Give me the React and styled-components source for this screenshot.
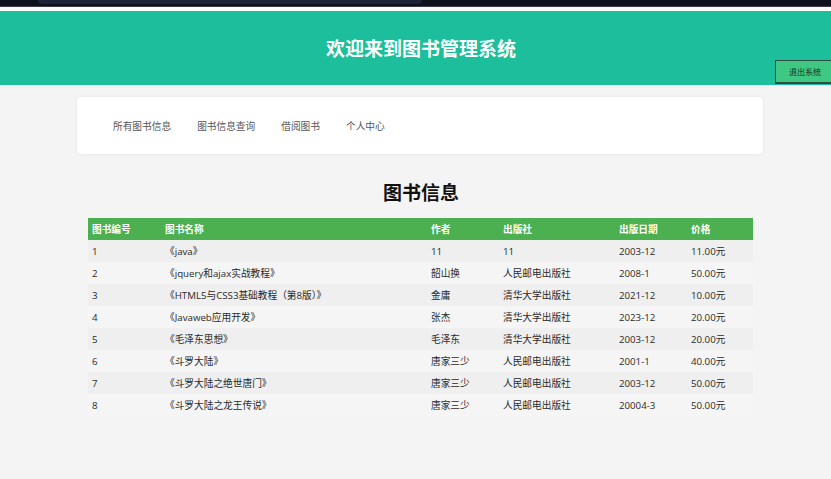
import React from "react";
import styled, { createGlobalStyle } from "styled-components";

const GlobalStyle = createGlobalStyle`
  html, body {
    margin: 0;
    padding: 0;
    background: #f4f4f4;
    font-family: "Open Sans", "Noto Sans CJK SC", sans-serif;
  }
`;

const Page = styled.div`
  width: 831px;
  height: 479px;
  overflow: hidden;
  display: flex;
  flex-direction: column;
`;

const Chrome = styled.div`
  height: 6px;
  background: #0e111c;
  border-bottom: 1px solid #3a3d48;
  padding-left: 38px;
  display: flex;
`;

const ChromePill = styled.div`
  width: 384px;
  height: 4px;
  background: #1e2236;
  border-radius: 0 0 4px 4px;
`;

const Gap = styled.div`
  height: 4px;
  background: #fafafa;
`;

const Header = styled.header`
  position: relative;
  height: 74px;
  background: #1dbe9b;
  display: flex;
  align-items: center;
  justify-content: center;
  padding-left: 11px;
`;

const Title = styled.h1`
  margin: 0;
  color: #fff;
  font-size: 19px;
  font-weight: 700;
`;

const Logout = styled.button`
  position: absolute;
  right: -4px;
  top: 49px;
  width: 60px;
  height: 24px;
  background: #3ec883;
  border: 1px solid #2d4d40;
  border-bottom-width: 2px;
  color: #1d2d25;
  font-size: 8px;
  font-family: inherit;
  padding: 0;
  text-align: center;
`;

const Main = styled.main`
  padding: 12px 68px 0 77px;
  display: flex;
  flex-direction: column;
`;

const NavCard = styled.nav`
  height: 57px;
  background: #fff;
  border-radius: 4px;
  box-shadow: 0 0 3px rgba(0, 0, 0, 0.08);
  display: flex;
  align-items: center;
  gap: 26px;
  padding: 0 36px;
`;

const NavLink = styled.a`
  font-size: 9.7px;
  color: #555;
  text-decoration: none;
`;

const SectionTitle = styled.h2`
  margin: 24px 0 12px;
  text-align: center;
  font-size: 19px;
  font-weight: 700;
  color: #111;
  padding-left: 2px;
`;

const Table = styled.table`
  margin-left: 11px;
  width: 665px;
  border-collapse: collapse;
  font-size: 9.7px;
  table-layout: fixed;
`;

const Th = styled.th`
  box-sizing: border-box;
  background: #4caf50;
  color: #fff;
  text-align: left;
  font-weight: 700;
  height: 22px;
  padding: 0 4px;
  width: ${p => p.w}px;
`;

const Row = styled.tr`
  background: ${p => (p.odd ? "#efefef" : "#f5f5f5")};
`;

const Td = styled.td`
  height: 22px;
  padding: 0 4px;
  color: #2a2a2a;
  white-space: nowrap;
`;

const columns = [
  { title: "图书编号", w: 73 },
  { title: "图书名称", w: 266 },
  { title: "作者", w: 72 },
  { title: "出版社", w: 116 },
  { title: "出版日期", w: 72 },
  { title: "价格", w: 66 },
];

const books = [
  ["1", "《java》", "11", "11", "2003-12", "11.00元"],
  ["2", "《jquery和ajax实战教程》", "韶山换", "人民邮电出版社", "2008-1", "50.00元"],
  ["3", "《HTML5与CSS3基础教程（第8版）》", "金庸", "清华大学出版社", "2021-12", "10.00元"],
  ["4", "《Javaweb应用开发》", "张杰", "清华大学出版社", "2023-12", "20.00元"],
  ["5", "《毛泽东思想》", "毛泽东", "清华大学出版社", "2003-12", "20.00元"],
  ["6", "《斗罗大陆》", "唐家三少", "人民邮电出版社", "2001-1", "40.00元"],
  ["7", "《斗罗大陆之绝世唐门》", "唐家三少", "人民邮电出版社", "2003-12", "50.00元"],
  ["8", "《斗罗大陆之龙王传说》", "唐家三少", "人民邮电出版社", "20004-3", "50.00元"],
];

export default function App() {
  return (
    <Page>
      <GlobalStyle />
      <Chrome>
        <ChromePill />
      </Chrome>
      <Gap />
      <Header>
        <Title>欢迎来到图书管理系统</Title>
        <Logout>退出系统</Logout>
      </Header>
      <Main>
        <NavCard>
          <NavLink href="#">所有图书信息</NavLink>
          <NavLink href="#">图书信息查询</NavLink>
          <NavLink href="#">借阅图书</NavLink>
          <NavLink href="#">个人中心</NavLink>
        </NavCard>
        <SectionTitle>图书信息</SectionTitle>
        <Table>
          <thead>
            <tr>
              {columns.map(c => (
                <Th key={c.title} w={c.w}>
                  {c.title}
                </Th>
              ))}
            </tr>
          </thead>
          <tbody>
            {books.map((b, i) => (
              <Row key={b[0]} odd={i % 2 === 0}>
                {b.map((cell, j) => (
                  <Td key={j}>{cell}</Td>
                ))}
              </Row>
            ))}
          </tbody>
        </Table>
      </Main>
    </Page>
  );
}
